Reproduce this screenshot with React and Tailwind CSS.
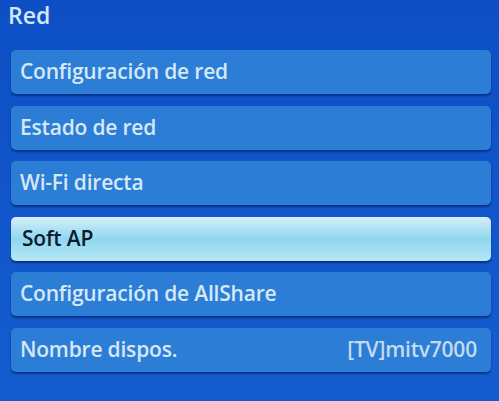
export default function App() {
  const items = [
    { label: "Configuración de red" },
    { label: "Estado de red" },
    { label: "Wi-Fi directa" },
    { label: "Soft AP", selected: true },
    { label: "Configuración de AllShare" },
    { label: "Nombre dispos.", value: "[TV]mitv7000" },
  ];

  return (
    <div
      className="w-[499px] h-[401px] overflow-hidden bg-gradient-to-b from-[#0d4ec4] via-[#1156ca] to-[#145dcf] pl-[11px] pr-[8px]"
      style={{ fontFamily: '"Open Sans", "Noto Sans", sans-serif' }}
    >
      <h1 className="-ml-[3px] text-[23px] leading-[30px] font-semibold text-[#d3e6f6]">Red</h1>
      <div className="mt-[20px] flex flex-col gap-[11.5px]">
        {items.map((item) => (
          <div
            key={item.label}
            className={
              item.selected
                ? "h-[44px] flex items-center justify-between pl-[11px] pr-[14px] rounded-[5px] bg-gradient-to-b from-[#d5eef8] via-[#8fd8f0] to-[#b7e6f6] shadow-[0_2px_2px_rgba(0,20,80,0.6)] text-[#0c1a2c]"
                : "h-[44px] flex items-center justify-between pl-[9px] pr-[14px] rounded-[5px] bg-[#2c7dd5] shadow-[0_2px_2px_rgba(0,20,80,0.55)] text-[#d6e8f7]"
            }
          >
            <span className="text-[21px] font-semibold tracking-[-0.2px]">{item.label}</span>
            {item.value && (
              <span className="text-[21px] font-semibold text-[#c4dbef] tracking-[-0.2px]">{item.value}</span>
            )}
          </div>
        ))}
      </div>
    </div>
  );
}
